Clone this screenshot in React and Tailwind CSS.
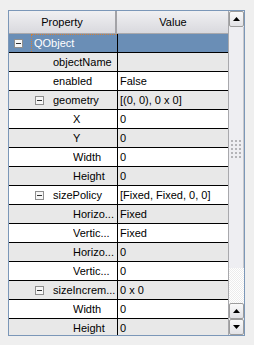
import React from "react";

const rows = [
  { name: "QObject", level: 0, expand: true, value: "", selected: true },
  { name: "objectName", level: 1, value: "" },
  { name: "enabled", level: 1, value: "False" },
  { name: "geometry", level: 1, expand: true, value: "[(0, 0), 0 x 0]" },
  { name: "X", level: 2, value: "0" },
  { name: "Y", level: 2, value: "0" },
  { name: "Width", level: 2, value: "0" },
  { name: "Height", level: 2, value: "0" },
  { name: "sizePolicy", level: 1, expand: true, value: "[Fixed, Fixed, 0, 0]" },
  { name: "Horizo...", level: 2, value: "Fixed" },
  { name: "Vertic...", level: 2, value: "Fixed" },
  { name: "Horizo...", level: 2, value: "0" },
  { name: "Vertic...", level: 2, value: "0" },
  { name: "sizeIncrem...", level: 1, expand: true, value: "0 x 0" },
  { name: "Width", level: 2, value: "0" },
  { name: "Height", level: 2, value: "0" },
];

const indentCls = [
  "w-[22px] pl-[5px]",
  "w-[44px] pl-[26px]",
  "w-[64px] pl-[46px]",
];

function ExpandBox() {
  return (
    <div className="w-[9px] h-[9px] border border-[#8e8e8e] bg-[#f6f6f6] flex items-center justify-center">
      <div className="w-[5px] h-[1px] bg-[#333]" />
    </div>
  );
}

function ArrowUp() {
  return (
    <svg width="7" height="4" viewBox="0 0 7 4">
      <path d="M3.5 0 L7 4 L0 4 Z" fill="#000" />
    </svg>
  );
}
function ArrowDown() {
  return (
    <svg width="7" height="4" viewBox="0 0 7 4">
      <path d="M0 0 L7 0 L3.5 4 Z" fill="#000" />
    </svg>
  );
}

function ScrollButton({ children }) {
  return (
    <div className="h-[16px] w-[15px] shrink-0 rounded-[2px] border border-[#9c9c9c] bg-gradient-to-b from-[#fafafa] to-[#e2e2e6] flex items-center justify-center">
      {children}
    </div>
  );
}

function Grip() {
  const cells = [];
  for (let i = 0; i < 15; i++) {
    cells.push(<div key={i} className="w-[2px] h-[2px] bg-[#b4b4b8]" />);
  }
  return <div className="grid grid-cols-3 gap-x-[2px] gap-y-[2px]">{cells}</div>;
}

export default function App() {
  return (
    <div
      className="w-[254px] h-[345px] bg-[#efefef] pt-[10px] pl-[8px] text-[11px] text-black"
      style={{ fontFamily: '"Liberation Sans", Arial, sans-serif' }}
    >
      <div className="w-[237px] h-[326px] border border-[#7b97b8] flex overflow-hidden bg-white">
        {/* table */}
        <div className="w-[219px] flex flex-col">
          {/* header */}
          <div className="h-[23px] flex shrink-0 bg-gradient-to-b from-[#f0f0f2] to-[#d9d9de] border-b border-[#a8a8ac]">
            <div className="w-[108px] flex items-center justify-center border-r-[2px] border-[#a2a2a6]">
              Property
            </div>
            <div className="flex-1 flex items-center justify-center pl-[1px]">Value</div>
          </div>
          {rows.map((r, i) => {
            const bg = r.selected
              ? "bg-[#6a8eb6] text-white"
              : i % 2 === 1
              ? "bg-[#e8e8e8]"
              : "bg-white";
            return (
              <div
                key={i}
                className={`h-[19px] shrink-0 flex border-b border-black ${bg}`}
              >
                <div className="w-[109px] shrink-0 flex border-r border-black">
                  <div className={`h-full flex items-center shrink-0 ${indentCls[r.level]}`}>
                    {r.expand ? <ExpandBox /> : null}
                  </div>
                  {r.selected ? (
                    <div className="flex-1 h-full flex items-center border-l border-t border-dotted border-[#d0803a] pl-[2px] whitespace-nowrap">
                      QObject
                    </div>
                  ) : (
                    <div className="flex-1 h-full flex items-center whitespace-nowrap overflow-hidden">
                      {r.name}
                    </div>
                  )}
                </div>
                <div className="flex-1 h-full flex items-center pl-[2px] whitespace-nowrap overflow-hidden">
                  {r.value}
                </div>
              </div>
            );
          })}
        </div>
        {/* scrollbar */}
        <div className="w-[16px] flex flex-col border-l border-[#a8a8ac] bg-[#f2f2f4]">
          <ScrollButton>
            <ArrowUp />
          </ScrollButton>
          <div className="h-[241px] shrink-0 bg-[#eeeef2] border-r border-[#c8c8cc] flex items-start justify-center pt-[113px]">
            <Grip />
          </div>
          <div
            className="flex-1 bg-[#f7f7f7]"
            style={{
              backgroundImage:
                "repeating-conic-gradient(#ececec 0% 25%, #ffffff 0% 50%)",
              backgroundSize: "2px 2px",
            }}
          />
          <ScrollButton>
            <ArrowUp />
          </ScrollButton>
          <ScrollButton>
            <ArrowDown />
          </ScrollButton>
        </div>
      </div>
    </div>
  );
}
